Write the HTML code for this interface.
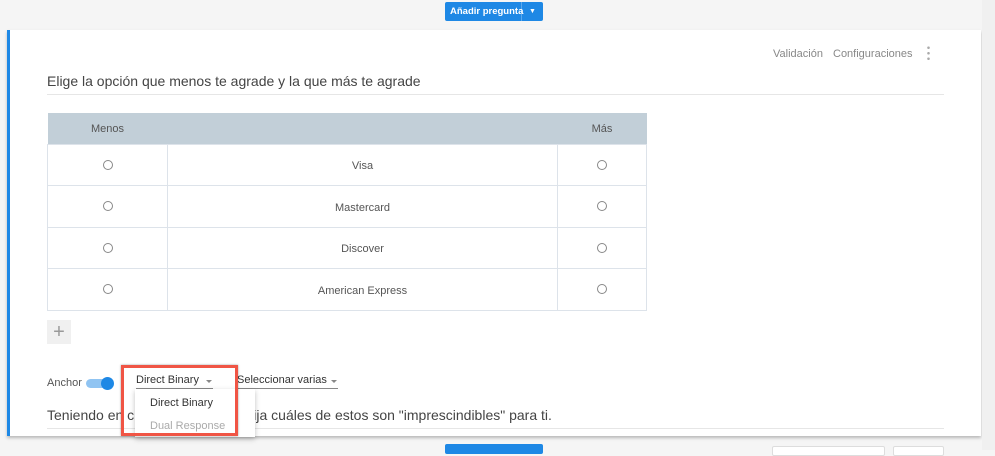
<!DOCTYPE html>
<html><head><meta charset="utf-8"><style>
*{box-sizing:border-box;margin:0;padding:0}
body{width:995px;height:450px;overflow:hidden;background:#f5f5f5;font-family:"Liberation Sans",sans-serif;position:relative;color:#444;white-space:nowrap}
.abs{position:absolute}
.btn{background:#1e88e5;color:#fff;font-size:9.5px;font-weight:bold;border-radius:2px;display:flex;align-items:center}
.card{left:7px;top:30px;width:974px;height:406px;background:#fff;border-left:3px solid #1e88e5;box-shadow:0 2px 3px rgba(0,0,0,.25)}
table{border-collapse:collapse;position:absolute;left:47px;top:113px;width:600px;font-size:11px;color:#555}
th{background:#c2cfd8;height:31px;font-weight:normal;color:#555;padding-top:2px}
td{height:41.5px;border:1px solid #dde3ea;text-align:center;padding-top:3px}
.r{display:inline-block;width:10px;height:10px;border:1px solid #888;border-radius:50%}
.dd{font-size:11px;color:#333;border-bottom:1px solid #888;height:15px}
.ar{position:absolute;right:0;top:4px;width:0;height:0;border-left:3px solid transparent;border-right:3px solid transparent;border-top:3px solid #888}
</style></head><body>
<div class="abs btn" style="left:445px;top:2px;width:98px;height:19px"><span style="padding-left:5px;width:77px;border-right:1px solid #5aa8ee;line-height:19px">Añadir pregunta</span><span style="flex:1;text-align:center;font-size:7px">▼</span></div>
<div class="abs card"></div>
<div class="abs" style="left:773px;top:48px;font-size:11px;color:#888">Validación</div>
<div class="abs" style="left:833px;top:48px;font-size:11px;color:#888">Configuraciones</div>
<div class="abs" style="left:927px;top:45px;width:3px;height:16px;background:radial-gradient(circle,#aaa 1.2px,transparent 1.4px) 0 0/3px 5.5px"></div>
<div class="abs" style="left:47px;top:73px;font-size:14px;color:#444">Elige la opción que menos te agrade y la que más te agrade</div>
<div class="abs" style="left:47px;top:94px;width:897px;height:1px;background:#e6e6e6"></div>
<table>
<tr><th style="width:120px">Menos</th><th style="width:390px"></th><th>Más</th></tr>
<tr><td><span class="r"></span></td><td>Visa</td><td><span class="r"></span></td></tr>
<tr><td><span class="r"></span></td><td>Mastercard</td><td><span class="r"></span></td></tr>
<tr><td><span class="r"></span></td><td>Discover</td><td><span class="r"></span></td></tr>
<tr><td><span class="r"></span></td><td>American Express</td><td><span class="r"></span></td></tr>
</table>
<div class="abs" style="left:47px;top:320px;width:24px;height:24px;background:#f0f0f0;color:#999;font-size:20px;text-align:center;line-height:24px">+</div>
<div class="abs" style="left:47px;top:377px;font-size:11px;color:#555">Anchor</div>
<div class="abs" style="left:86px;top:379px;width:26px;height:9px;border-radius:5px;background:#90c4f2"></div>
<div class="abs" style="left:101px;top:377px;width:13px;height:13px;border-radius:50%;background:#1e88e5"></div>
<div class="abs dd" style="left:136px;top:374px;width:77px">Direct Binary<span class="ar" style="right:1px;top:6px"></span></div>
<div class="abs dd" style="left:237px;top:374px;width:101px">Seleccionar varias<span class="ar" style="right:1px;top:6px"></span></div>
<div class="abs" style="left:47px;top:407px;font-size:14px;color:#444">Teniendo en cuenta lo anterior, elija cuáles de estos son "imprescindibles" para ti.</div>
<div class="abs" style="left:47px;top:428px;width:897px;height:1px;background:#e6e6e6"></div>
<div class="abs" style="left:135px;top:389px;width:120px;height:48px;background:#fff;box-shadow:0 2px 5px rgba(0,0,0,.25)"></div>
<div class="abs" style="left:150px;top:397px;font-size:11px;color:#333">Direct Binary</div>
<div class="abs" style="left:150px;top:420px;font-size:11px;color:#aaa">Dual Response</div>
<div class="abs" style="left:121px;top:365px;width:117px;height:71px;border:3px solid #f05545;box-shadow:0 0 2px rgba(0,0,0,.4)"></div>
<div class="abs btn" style="left:445px;top:444px;width:98px;height:10px"></div>
<div class="abs" style="left:772px;top:446px;width:113px;height:10px;background:#fff;border:1px solid #ddd;border-radius:2px"></div>
<div class="abs" style="left:893px;top:446px;width:51px;height:10px;background:#fff;border:1px solid #ddd;border-radius:2px"></div>
<div class="abs" style="left:982px;top:0;width:13px;height:450px;background:#f0f0f0"></div>
</body></html>
